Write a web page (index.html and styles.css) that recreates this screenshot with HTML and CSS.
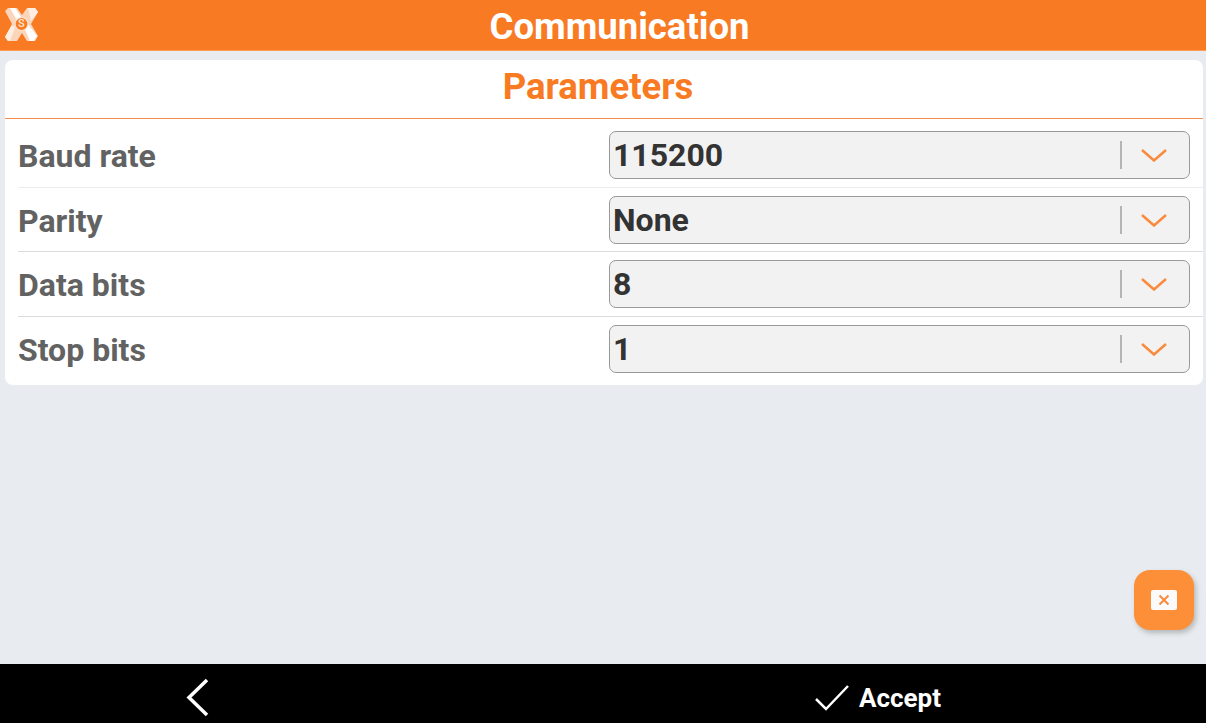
FILE: index.html
```html
<!DOCTYPE html>
<html>

  <head>
    <meta charset="utf-8">
    <link rel="stylesheet" href="styles.css">
  </head>

  <body>
    <div class="app">
      <div class="topbar">
        <svg class="logo" width="36" height="36" viewBox="0 0 36 36">
          <path d="M1 4 L4 1 L13 1 L18 8 L23 1 L31 1 L34 5 L27 17 L34 29 L31 34 L23 34 L18 26 L13 34 L4 34 L1 30 L8 17 Z" fill="#fbd5b9"/>
          <path d="M6 1 L11 1 L20 14 L15 17 Z" fill="#ffffff"/>
          <path d="M20 20 L24 17 L33 29 L30 34 L26 34 Z" fill="#ffffff"/>
          <path d="M1 30 L8 18 L11 21 L6 34 L4 34 Z" fill="#fdeee3"/>
          <path d="M24 1 L31 1 L34 5 L27 14 Z" fill="#fdeee3"/>
          <circle cx="17.500" cy="17" r="6.500" fill="#f97c23" stroke="#fde6d5" stroke-width="1.200"/>
        </svg>
        <span class="logo-s">S</span>
        <h1>Communication</h1>
      </div>

      <div class="content">
        <div class="card">
          <h2>Parameters</h2>

          <div class="row">
            <label>Baud rate</label>
            <div class="select">
              <span class="select-value">115200</span>
              <span class="select-sep"></span>
              <svg class="chevron" width="26" height="14" viewBox="0 0 26 14"><path d="M1 2 L13 12.500 L25 2" /></svg>
            </div>
          </div>

          <div class="row">
            <label>Parity</label>
            <div class="select">
              <span class="select-value">None</span>
              <span class="select-sep"></span>
              <svg class="chevron" width="26" height="14" viewBox="0 0 26 14"><path d="M1 2 L13 12.500 L25 2" /></svg>
            </div>
          </div>

          <div class="row">
            <label>Data bits</label>
            <div class="select">
              <span class="select-value">8</span>
              <span class="select-sep"></span>
              <svg class="chevron" width="26" height="14" viewBox="0 0 26 14"><path d="M1 2 L13 12.500 L25 2" /></svg>
            </div>
          </div>

          <div class="row">
            <label>Stop bits</label>
            <div class="select">
              <span class="select-value">1</span>
              <span class="select-sep"></span>
              <svg class="chevron" width="26" height="14" viewBox="0 0 26 14"><path d="M1 2 L13 12.500 L25 2" /></svg>
            </div>
          </div>
        </div>

        <div class="fab">
          <div class="fab-key">
            <svg width="12" height="12" viewBox="0 0 12 12"><path d="M1.500 1.500 L10.500 10.500 M10.500 1.500 L1.500 10.500" /></svg>
          </div>
        </div>
      </div>

      <div class="bottombar">
        <div class="bottom-left">
          <svg width="26" height="40" viewBox="0 0 26 40"><path d="M22 2 L4 19.500 L22 37" /></svg>
        </div>
        <div class="bottom-right">
          <svg width="36" height="28" viewBox="0 0 36 28"><path d="M2 15 L12 25 L34 2" /></svg>
          <span>Accept</span>
        </div>
      </div>
    </div>
  </body>

</html>
```

FILE: styles.css
```css
html,
body {
  margin: 0;
  padding: 0;
}

body {
  font-family: Roboto, "Liberation Sans", sans-serif;
  background-color: #e8ebef;
}

.app {
  width: 1206px;
  height: 723px;
  display: flex;
  flex-direction: column;
  overflow: hidden;
}

.topbar {
  flex: 0 0 51px;
  box-sizing: border-box;
  position: relative;
  display: flex;
  align-items: center;
  justify-content: center;
  padding-left: 33px;
  background-color: #f87a22;
  border-bottom: 1px solid #fb9c58;
}

.topbar h1 {
  margin: 3px 0 0;
  font-size: 36.500px;
  font-weight: 700;
  color: #fff;
}

.logo {
  position: absolute;
  left: 4px;
  top: 7px;
}

.logo-s {
  position: absolute;
  left: 18px;
  top: 16px;
  font-size: 11px;
  line-height: 16px;
  font-weight: 500;
  color: #fde6d5;
}

.content {
  flex: 1;
  position: relative;
  padding: 9px 3px 0 5px;
}

.card {
  background-color: #fff;
  border-radius: 8px;
  height: 325px;
}

.card h2 {
  margin: 0;
  height: 58.500px;
  box-sizing: border-box;
  padding: 6px 12px 0 0;
  font-size: 36.500px;
  line-height: 42px;
  font-weight: 700;
  text-align: center;
  color: #f87a22;
  border-bottom: 1px solid #f58d4a;
}

.row {
  height: 64.500px;
  box-sizing: border-box;
  display: flex;
  align-items: center;
  justify-content: space-between;
  margin-left: 13px;
  padding-right: 13px;
  padding-top: 1px;
  border-bottom: 1px solid #dcdcdc;
}

.row:first-of-type {
  height: 69px;
  padding-top: 5px;
  border-bottom-color: #ececec;
}

.row:last-child {
  border-bottom: none;
}

.row label {
  margin-top: 2px;
  font-size: 32px;
  font-weight: 700;
  color: #626262;
}

.select {
  width: 581px;
  height: 48px;
  box-sizing: border-box;
  display: flex;
  align-items: center;
  padding-left: 3px;
  background-color: #f2f2f2;
  border: 1.500px solid #999;
  border-radius: 7px;
}

.select-value {
  flex: 1;
  font-size: 32px;
  font-weight: 700;
  color: #333;
}

.select-sep {
  width: 2px;
  height: 28px;
  background-color: #b5b5b5;
}

.chevron {
  margin: 0 22px 0 19px;
}

.chevron path {
  fill: none;
  stroke: #f98a3c;
  stroke-width: 2.500;
}

.fab {
  position: absolute;
  left: 1134px;
  top: 519px;
  width: 60px;
  height: 60px;
  display: flex;
  align-items: center;
  justify-content: center;
  background-color: #fd8f38;
  border-radius: 16px;
  box-shadow: 2px 3px 5px rgba(90, 90, 90, 0.35);
}

.fab-key {
  width: 26px;
  height: 20px;
  display: flex;
  align-items: center;
  justify-content: center;
  background-color: #fbfbfb;
  border-radius: 2px;
}

.fab-key path {
  fill: none;
  stroke: #f98a3c;
  stroke-width: 2;
}

.bottombar {
  flex: 0 0 59px;
  display: flex;
  background-color: #000;
}

.bottom-left {
  width: 396px;
  display: flex;
  align-items: center;
  justify-content: center;
  padding-top: 9px;
  box-sizing: border-box;
}

.bottom-right {
  flex: 1;
  display: flex;
  align-items: center;
  padding-left: 418px;
  padding-top: 9px;
  gap: 9px;
  color: #fff;
  font-size: 26px;
  font-weight: 700;
}

.bottombar path {
  fill: none;
  stroke: #fff;
  stroke-width: 3.500;
}

.bottom-right path {
  stroke-width: 2.500;
}
```
